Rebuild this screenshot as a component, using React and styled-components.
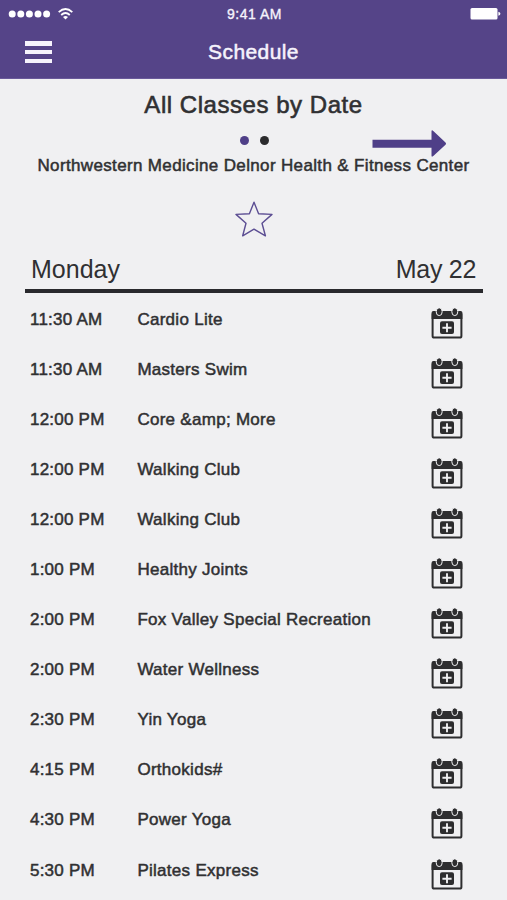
import React from "react";
import styled, { createGlobalStyle } from "styled-components";

const GlobalStyle = createGlobalStyle`
    body {
        margin: 0;
        background: #f0f0f2;
        color: #303032;
        font-family: "Liberation Sans", Arial, sans-serif;
    }
`;

const Screen = styled.div`
    height: 900px;
    overflow: hidden;
    background: #f0f0f2;
`;

const Header = styled.header`
    height: 79px;
    box-sizing: border-box;
    background: #554488;
    border-bottom: 1px solid #6a5a9a;
    color: #f6f3fc;
`;

const StatusBar = styled.div`
    height: 28px;
    display: grid;
    grid-template-columns: 1fr auto 1fr;
    align-items: center;
    padding: 0 6px 0 8px;
`;

const Signal = styled.div`
    display: flex;
    align-items: center;
    gap: 7px;
    margin-top: -1px;
`;

const Clock = styled.span`
    font-size: 14px;
    line-height: 16px;
    letter-spacing: 0.5px;
    -webkit-text-stroke: 0.35px;
`;

const Battery = styled.svg`
    justify-self: end;
`;

const NavBar = styled.div`
    height: 48px;
    display: grid;
    grid-template-columns: 1fr auto 1fr;
    align-items: center;
    padding: 0 25px;
`;

const MenuButton = styled.button`
    width: 27px;
    height: 22px;
    padding: 0;
    border: none;
    background: none;
    display: flex;
    flex-direction: column;
    justify-content: space-between;

    span {
        height: 4.5px;
        width: 100%;
        background: #f6f3fc;
    }
`;

const NavTitle = styled.h1`
    margin: 0;
    font-size: 21px;
    line-height: 24px;
    font-weight: 400;
    letter-spacing: 0.4px;
    -webkit-text-stroke: 0.5px;
`;

const Intro = styled.section`
    position: relative;
    display: flex;
    flex-direction: column;
    align-items: center;
`;

const Title = styled.h2`
    margin: 12px 0 0;
    font-size: 24px;
    line-height: 28px;
    font-weight: 400;
    letter-spacing: 0.54px;
    -webkit-text-stroke: 0.6px;
`;

const Dots = styled.div`
    display: flex;
    gap: 11px;
    margin-top: 17px;
    padding-left: 1px;
`;

const Dot = styled.span`
    width: 9px;
    height: 9px;
    border-radius: 50%;
    background: ${(props) => (props.$active ? "#4f3f88" : "#2b2b2d")};
`;

const Arrow = styled.svg`
    position: absolute;
    left: 372px;
    top: 50px;
`;

const Location = styled.p`
    position: relative;
    margin: 11px 0 0;
    font-size: 17px;
    line-height: 20px;
    letter-spacing: 0.35px;
    white-space: nowrap;
    -webkit-text-stroke: 0.5px;
`;

const Star = styled.svg`
    margin-top: 24px;
`;

const DayHeader = styled.div`
    display: flex;
    justify-content: space-between;
    margin: 16px 24px 0 25px;
    padding: 0 7px 5px 6px;
    border-bottom: 4px solid #29292d;
    font-size: 25px;
    line-height: 30px;
`;

const DateLabel = styled.span`
    letter-spacing: -0.3px;
`;

const ClassList = styled.ul`
    list-style: none;
    margin: 0;
    padding: 2px 0 0;
`;

const ClassRow = styled.li`
    height: 50.05px;
    display: grid;
    grid-template-columns: 107.4px 1fr 32px;
    align-items: center;
    padding: 0 44px 0 30px;
    font-size: 17px;
    line-height: 20px;
    white-space: nowrap;
    -webkit-text-stroke: 0.5px;
`;

const ClassTime = styled.span`
    letter-spacing: 0.22px;
`;

const ClassName = styled.span`
    letter-spacing: 0.28px;
`;

const CalendarSvg = styled.svg`
    margin-top: 8px;
`;

const classes = [
    { time: "11:30 AM", name: "Cardio Lite" },
    { time: "11:30 AM", name: "Masters Swim" },
    { time: "12:00 PM", name: "Core &amp; More" },
    { time: "12:00 PM", name: "Walking Club" },
    { time: "12:00 PM", name: "Walking Club" },
    { time: "1:00 PM", name: "Healthy Joints" },
    { time: "2:00 PM", name: "Fox Valley Special Recreation" },
    { time: "2:00 PM", name: "Water Wellness" },
    { time: "2:30 PM", name: "Yin Yoga" },
    { time: "4:15 PM", name: "Orthokids#" },
    { time: "4:30 PM", name: "Power Yoga" },
    { time: "5:30 PM", name: "Pilates Express" },
];

function CalendarIcon() {
    return (
        <CalendarSvg width="32" height="32" viewBox="0 0 32 32">
            <rect x="1.6" y="5" width="28.8" height="24.6" rx="1.6" fill="none" stroke="#2d2d2f" strokeWidth="2" />
            <path d="M.6 4.7q0-1.7 1.7-1.7h27.4q1.7 0 1.7 1.7v6.3H.6z" fill="#2d2d2f" />
            <ellipse cx="8.2" cy="3.7" rx="3" ry="3.9" fill="#2d2d2f" stroke="#f0f0f2" strokeWidth="1" />
            <ellipse cx="23.8" cy="3.7" rx="3" ry="3.9" fill="#2d2d2f" stroke="#f0f0f2" strokeWidth="1" />
            <rect x="9" y="13.3" width="14" height="12.8" rx="2" fill="#2d2d2f" />
            <path d="M16 15.2v9M11.4 19.7h9.2" stroke="#f0f0f2" strokeWidth="1.9" />
        </CalendarSvg>
    );
}

function App() {
    return (
        <Screen>
            <GlobalStyle />
            <Header>
                <StatusBar>
                    <Signal>
                        <svg width="43" height="8" viewBox="0 0 43 8" fill="#fff">
                            {[4.2, 12.8, 21.4, 30, 38.6].map((x) => (
                                <circle key={x} cx={x} cy="4" r="3.5" />
                            ))}
                        </svg>
                        <svg width="15" height="12" viewBox="0 0 15 12" fill="none" stroke="#fff" strokeWidth="1.8">
                            <path d="M.7 4.2Q7.5-2.1 14.3 4.2M3.2 7q4.3-4 8.6 0" />
                            <path d="M5 9q2.5-2 5 0L7.5 11.6z" fill="#fff" stroke="none" />
                        </svg>
                    </Signal>
                    <Clock>9:41 AM</Clock>
                    <Battery width="31" height="12" viewBox="0 0 31 12" fill="#fff">
                        <rect x=".5" y="0" width="27" height="11.6" rx="1.5" />
                        <path d="M28.4 3.8q2 .3 2 2t-2 2z" />
                    </Battery>
                </StatusBar>
                <NavBar>
                    <MenuButton aria-label="Menu">
                        <span />
                        <span />
                        <span />
                    </MenuButton>
                    <NavTitle>Schedule</NavTitle>
                </NavBar>
            </Header>
            <Intro>
                <Title>All Classes by Date</Title>
                <Dots>
                    <Dot $active />
                    <Dot />
                </Dots>
                <Arrow width="76" height="30" viewBox="0 0 76 30">
                    <path d="M.5 10.8H59.5V2.5q0-2 1.8-.6L73.5 13.4q1.3 1.2 0 2.4L61.3 27q-1.8 1.4-1.8-.6V18.8H.5z" fill="#4f3f88" />
                </Arrow>
                <Location>Northwestern Medicine Delnor Health &amp; Fitness Center</Location>
                <Star width="38" height="38" viewBox="0 0 38 38" fill="none" stroke="#5c4e93" strokeWidth="1.4" strokeLinejoin="round">
                    <path d="M19 2.2l4.6 11.5 13.4.7-10 8.8 3.4 12.6L19 29.2 7.7 35.8 11 23.2 1 14.4l13.4-.7z" />
                </Star>
            </Intro>
            <DayHeader>
                <span>Monday</span>
                <DateLabel>May 22</DateLabel>
            </DayHeader>
            <ClassList>
                {classes.map((item, index) => (
                    <ClassRow key={index}>
                        <ClassTime>{item.time}</ClassTime>
                        <ClassName>{item.name}</ClassName>
                        <CalendarIcon />
                    </ClassRow>
                ))}
            </ClassList>
        </Screen>
    );
}

export default App;
